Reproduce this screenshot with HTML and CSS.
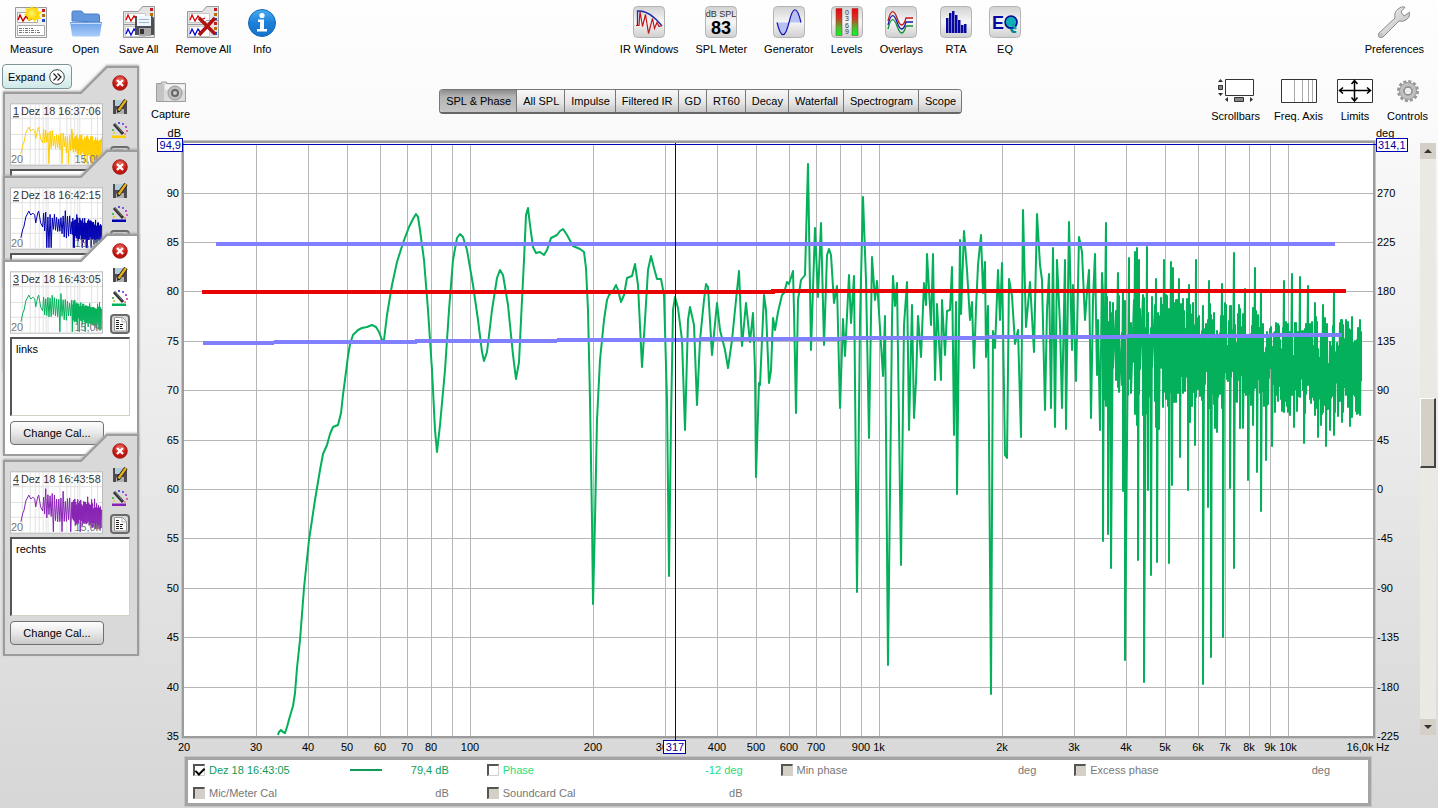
FILE: index.html
```
<!DOCTYPE html>
<html lang="en">
<head>
    <meta charset="UTF-8">
    <meta name="viewport" content="width=device-width, initial-scale=1.0">
    <title>Room Measurement</title>
    <link rel="stylesheet" href="styles.css">
</head>
<body>
    <!-- Shared icons -->
    <svg class="defs" width="0" height="0" aria-hidden="true">
        <defs>
            <linearGradient id="gTile" x1="0" y1="0" x2="0" y2="1"><stop offset="0" stop-color="#d2d2d2"/><stop offset=".5" stop-color="#f6f6f6"/><stop offset="1" stop-color="#cfcfcf"/></linearGradient>
            <linearGradient id="gFolder" x1="0" y1="0" x2="0" y2="1"><stop offset="0" stop-color="#6a9fe8"/><stop offset="1" stop-color="#a9cdfa"/></linearGradient>
            <linearGradient id="gInfo" x1="0" y1="0" x2="0" y2="1"><stop offset="0" stop-color="#49aef5"/><stop offset=".5" stop-color="#1b7fd8"/><stop offset="1" stop-color="#1672cc"/></linearGradient>
            <linearGradient id="gLevel" x1="0" y1="0" x2="0" y2="1"><stop offset="0" stop-color="#f00010"/><stop offset=".35" stop-color="#d83020"/><stop offset=".7" stop-color="#50b830"/><stop offset="1" stop-color="#00ff20"/></linearGradient>
            <linearGradient id="gMetal" x1="0" y1="0" x2="1" y2="1"><stop offset="0" stop-color="#fafafa"/><stop offset="1" stop-color="#b4b4b4"/></linearGradient>
            <radialGradient id="gSun"><stop offset="0" stop-color="#fff27a"/><stop offset="1" stop-color="#ffd400"/></radialGradient>
            <radialGradient id="gClose" cx=".5" cy=".3"><stop offset="0" stop-color="#f07060"/><stop offset="1" stop-color="#c01410"/></radialGradient>
        </defs>
        <symbol id="tile" viewBox="0 0 32 32">
            <rect x=".5" y=".5" width="31" height="31" rx="4" fill="url(#gTile)" stroke="#b4b4b4"/>
        </symbol>
        <symbol id="sheets" viewBox="0 0 32 32">
            <path d="M.5 5.500h15l4-5h12v31h-31z" fill="#e4e4e4" stroke="#999"/>
            <path d="M2.500 7.500h20v9h-20zM2.500 20.500h20v10h-20z" fill="#fff" stroke="#c8c8c8"/>
            <path d="M.5 18.500h15l4-4h12" fill="none" stroke="#999"/>
            <path d="M3 14l2-5 3 6 3-5 3 4 4-2" fill="none" stroke="#d00000" stroke-width="1.300"/>
            <path d="M3 28l2-5 3 6 3-6 3 4" fill="none" stroke="#0000d0" stroke-width="1.300"/>
            <path d="M27 2h3v3h-3zM27 16h3v3h-3z" fill="#c02020"/><path d="M27 7h3v3h-3zM27 21h3v3h-3z" fill="#b07010"/><path d="M27 12h3v2h-3zM27 26h3v3h-3z" fill="#2050c0"/>
        </symbol>
        <symbol id="close" viewBox="0 0 16 16">
            <circle cx="8" cy="8" r="7.300" fill="url(#gClose)" stroke="#98100c" stroke-width=".8"/>
            <path d="M5 5l6 6M11 5l-6 6" stroke="#fff" stroke-width="2.400"/>
        </symbol>
        <symbol id="savePen" viewBox="0 0 16 16">
            <path d="M1 1h14v14h-14z" fill="#4a4a50"/><path d="M3 1h9v6h-9z" fill="#b4ccd4"/><path d="M4 10h8v5h-8z" fill="#b0b0b0"/>
            <path d="M14 1L6 12" stroke="#222" stroke-width="4"/><path d="M14 1L6.500 11.500" stroke="#e8b020" stroke-width="2.400"/><path d="M5 14l.5-3 2 1.500z" fill="#111"/>
        </symbol>
        <symbol id="wand" viewBox="0 0 16 16">
            <path d="M0 13.500h14v2.500h-14z" fill="currentColor"/>
            <path d="M2 2l9 10" stroke="#333" stroke-width="3"/><path d="M3 2l7 8" stroke="#777"/>
            <path d="M0 7h2v2h-2z" fill="#58b858"/><path d="M6 0h2v2h-2z" fill="#5058e0"/><path d="M10 1h2v2h-2z" fill="#8060e0"/><path d="M13 4h2v2h-2z" fill="#b050d0"/><path d="M14 8h2v2h-2z" fill="#e060b0"/><path d="M12 11h2v2h-2z" fill="#f09090"/><path d="M1 10h2v2h-2z" fill="#e0d040"/>
        </symbol>
        <symbol id="notes" viewBox="0 0 20 20">
            <rect x="1" y="1" width="18" height="18" rx="3" fill="#d8d8d8" stroke="#6a6a6a" stroke-width="2"/>
            <path d="M4.500 3.500h8l4 4v9.500h-12z" fill="#fff" stroke="#999"/><path d="M12 3v5h5" fill="none" stroke="#aaa"/>
            <path d="M6 6.500h4M6 8.500h3M6 10.500h7M6 12.500h6M6 14.500h8" stroke="#222" stroke-dasharray="3 1"/>
        </symbol>
    </svg>

    <header class="toolbar">
        <div class="tool-group">
            <button class="tool">
                <svg viewBox="0 0 32 32"><path d="M.5 1.500h31v30h-31z" fill="#f2f2f2" stroke="#999"/><path d="M2.500 6.500h20v10h-20zM2.500 19.500h27v10h-27z" fill="#fff" stroke="#aaa"/><path d="M3 14l2-5 3 6 3-5 3 4 4-2" fill="none" stroke="#d00000" stroke-width="1.500"/><path d="M4 22.500h14M4 24.500h20M4 26.500h22" stroke="#777" stroke-dasharray="3 1 1 1"/><path d="M27 3h3v3h-3z" fill="#c02020"/><path d="M27 8h3v3h-3z" fill="#b07010"/><path d="M27 13h3v3h-3z" fill="#2050c0"/><path d="M17 0l2 3 4-2 0 4 4 1-3 3 2 4-4 0-2 3-3-3-4 2 0-4-4-2 3-3-2-4 4 1z" fill="#ffde00"/><circle cx="17" cy="7.500" r="6" fill="url(#gSun)"/></svg>
                Measure
            </button>
            <button class="tool">
                <svg viewBox="0 0 32 32"><path d="M2 15V6.500q0-1.500 1.500-1.500h8l3 3h13q2 0 2 2v6z" fill="#6498de" stroke="#4a7cc4"/><path d="M0 16h32l-2 13q0 1.500-2 1.500h-24q-2 0-2-1.500z" fill="url(#gFolder)"/><path d="M1 17.500h30" stroke="#c4defc"/></svg>
                Open
            </button>
            <button class="tool">
                <svg viewBox="0 0 32 32"><use href="#sheets"/><path d="M12 10h17l2 2v17h-19z" fill="#4c5056"/><path d="M14 10h14v10h-14z" fill="#eef6fc"/><path d="M16 13.500h10M16 16.500h10" stroke="#9ab8d0"/><path d="M16 22h12v8h-12z" fill="#a8a8a8"/><path d="M17 23h4v5h-4z" fill="#333"/></svg>
                Save All
            </button>
            <button class="tool">
                <svg viewBox="0 0 32 32"><use href="#sheets"/><path d="M12 12L28 28M28 12L12 29" stroke="#b01010" stroke-width="3.500"/></svg>
                Remove All
            </button>
            <button class="tool narrow">
                <svg viewBox="2 0 28 32"><circle cx="16" cy="17" r="13.500" fill="url(#gInfo)" stroke="#1668b8"/><circle cx="16" cy="9.500" r="2.600" fill="#fff"/><path d="M12 13.500h6v9.500h3v2.500h-10v-2.500h3v-7h-2z" fill="#fff"/></svg>
                Info
            </button>
        </div>
        <div class="tool-group">
            <button class="tool">
                <svg viewBox="0 0 32 32"><use href="#tile"/><path d="M4.500 20V5h2Q17 5 29 20" fill="none" stroke="#2030b0" stroke-width="1.300"/><path d="M3 19.500h3l1-14 2.500 15 3-12 3 19 4-15 2 10 2.500-6 2 4 3-1" fill="none" stroke="#c01818" stroke-width="1.200"/></svg>
                IR Windows
            </button>
            <button class="tool">
                <svg viewBox="0 0 32 32"><use href="#tile"/><text x="16" y="11" class="spl-unit">dB SPL</text><text x="16" y="28" class="spl-value">83</text></svg>
                SPL Meter
            </button>
            <button class="tool">
                <svg viewBox="0 0 32 32"><use href="#tile"/><path d="M4 16.500Q10 41 16 16.500Q22-9 28 16.500z" fill="#b8c0f4"/><path d="M4 16.500Q10 41 16 16.500Q22-9 28 16.500" fill="none" stroke="#1414b0" stroke-width="1.200"/></svg>
                Generator
            </button>
            <button class="tool">
                <svg viewBox="0 0 32 32"><use href="#tile"/><path d="M5 2.500h6v27h-6zM21 2.500h6v27h-6z" fill="url(#gLevel)" stroke="#804030" stroke-width=".5"/><text x="16" y="9" class="level-num">0</text><text x="16" y="15" class="level-num">3</text><text x="16" y="22" class="level-num">6</text><text x="16" y="28" class="level-num">9</text></svg>
                Levels
            </button>
            <button class="tool">
                <svg viewBox="0 0 32 32"><use href="#tile"/><g fill="none" stroke-width="1.300"><path d="M3 15Q7-2 12 12T21 12L28 12" stroke="#c01818"/><path d="M3 19Q7 2 12 16T21 16L28 16" stroke="#1818a8"/><path d="M3 23Q7 6 12 20T21 20L28 20" stroke="#109030"/></g></svg>
                Overlays
            </button>
            <button class="tool">
                <svg viewBox="0 0 32 32"><use href="#tile"/><path d="M6 12h2.500v15h-2.500zM9 7h2.500v20h-2.500zM12 5h2.500v22h-2.500zM15 9h2.500v18h-2.500zM18 14h2.500v13h-2.500zM21 19h2.500v8h-2.500zM24 18h2.500v9h-2.500z" fill="#0808a0"/></svg>
                RTA
            </button>
            <button class="tool">
                <svg viewBox="0 0 32 32"><use href="#tile"/><text x="3" y="23" class="eq-text">E<tspan fill="#088898">Q</tspan></text><circle cx="22" cy="16" r="5" fill="#10b0b8"/><circle cx="22" cy="16" r="6" fill="none" stroke="#0808a0" stroke-width="1.500"/><path d="M23 18l4 5" stroke="#10a0a8" stroke-width="2.500"/></svg>
                EQ
            </button>
        </div>
        <div class="tool-group">
            <button class="tool">
                <svg viewBox="0 0 32 32"><path d="M1 27L17 12Q16 6 20 3Q23 0 27 1L23 6L26 10L32 6Q32 12 28 14Q25 16 21 15L5 31Q3 33 1 31Q-1 29 1 27z" fill="url(#gMetal)" stroke="#8c8c8c"/><circle cx="3" cy="29" r="1.300" fill="#fff" stroke="#888" stroke-width=".7"/></svg>
                Preferences
            </button>
        </div>
    </header>

    <div class="workspace">
        <aside class="sidebar">
            <button class="expand-btn">Expand
                <svg viewBox="0 0 16 16"><circle cx="8" cy="8" r="7.300" fill="#fff" stroke="#444"/><path d="M4.500 4.500L8 8L4.500 11.500M8.500 4.500L12 8L8.500 11.500" fill="none" stroke="#222" stroke-width="1.200"/></svg>
            </button>
            <ul id="cards"></ul>
        </aside>

        <main class="content">
            <div class="graph-bar">
                <button class="tool small">
                    <svg viewBox="0 0 36 24"><path d="M3.500 4.500h5V3h5v1.500h19v18h-29z" fill="#dcdcdc" stroke="#9c9c9c"/><path d="M4 5h7v17h-7z" fill="#c4c4c4"/><path d="M12 5.500h20v5h-20z" fill="#f4f4f4"/><circle cx="22" cy="14" r="7" fill="#c0c0c0" stroke="#999"/><circle cx="22" cy="14" r="4" fill="#666"/><circle cx="22" cy="14" r="2" fill="#ccc"/></svg>
                    Capture
                </button>
                <nav class="tabs">
                    <button class="active">SPL &amp; Phase</button>
                    <button>All SPL</button>
                    <button>Impulse</button>
                    <button>Filtered IR</button>
                    <button>GD</button>
                    <button>RT60</button>
                    <button>Decay</button>
                    <button>Waterfall</button>
                    <button>Spectrogram</button>
                    <button>Scope</button>
                </nav>
                <div class="tool-group graph-tools">
                    <button class="tool small">
                        <svg viewBox="0 0 36 24"><path d="M7.500.5h28v16h-28z" fill="#fff" stroke="#333"/><path d="M.5 6.500h4v4h-4zM16.500 18.500h9v4h-9z" fill="#888" stroke="#333"/><path d="M0 3l2.500-3L5 3zM0 14l2.500 3L5 14zM10 18v5l-3-2.500zM32 18v5l3-2.500z" fill="#333"/></svg>
                        Scrollbars
                    </button>
                    <button class="tool small">
                        <svg viewBox="0 0 36 24"><path d="M.5.5h35v23h-35z" fill="#fff" stroke="#333"/><path d="M13.500 1v22M21.500 1v22M27.500 1v22M31.500 1v22" stroke="#aaa"/></svg>
                        Freq. Axis
                    </button>
                    <button class="tool small">
                        <svg viewBox="0 0 36 24"><path d="M.5.5h35v23h-35z" fill="#fff" stroke="#333"/><path d="M3 11.500h30M17.500 2v20M6 8.500l-3.500 3 3.500 3M30 8.500l3.500 3-3.500 3M14.500 5l3-3.500 3 3.500M14.500 18.500l3 3.500 3-3.500" fill="none" stroke="#000" stroke-width="1.500"/></svg>
                        Limits
                    </button>
                    <button class="tool small">
                        <svg viewBox="0 0 36 24"><circle cx="18" cy="12" r="9.500" fill="none" stroke="#999" stroke-width="3" stroke-dasharray="3 1.974"/><circle cx="18" cy="12" r="8.500" fill="#c0c0c0" stroke="#999"/><circle cx="18" cy="12" r="4" fill="#eee" stroke="#888" stroke-width="1.500"/></svg>
                        Controls
                    </button>
                </div>
            </div>

            <div class="graph-row">
                <svg id="graph" viewBox="145 125 1270 632"></svg>
                <div class="scrollbar">
                    <button aria-label="Scroll up"><svg viewBox="0 0 16 16"><path d="M4 10l4-4 4 4z"/></svg></button>
                    <div class="track">
                        <div class="thumb"></div>
                    </div>
                    <button aria-label="Scroll down"><svg viewBox="0 0 16 16"><path d="M4 6l4 4 4-4z"/></svg></button>
                </div>
            </div>

            <div class="legend">
                <div class="legend-item trace">
                    <label><input type="checkbox" checked> Dez 18 16:43:05</label>
                    <span class="trace-line"></span>
                    <span class="value">79,4 dB</span>
                </div>
                <div class="legend-item phase">
                    <label><input type="checkbox"> Phase</label>
                    <span class="value">-12 deg</span>
                </div>
                <div class="legend-item">
                    <label><input type="checkbox" disabled> Min phase</label>
                    <span class="value">deg</span>
                </div>
                <div class="legend-item">
                    <label><input type="checkbox" disabled> Excess phase</label>
                    <span class="value">deg</span>
                </div>
                <div class="legend-item">
                    <label><input type="checkbox" disabled> Mic/Meter Cal</label>
                    <span class="value">dB</span>
                </div>
                <div class="legend-item">
                    <label><input type="checkbox" disabled> Soundcard Cal</label>
                    <span class="value">dB</span>
                </div>
            </div>
        </main>
    </div>

    <script src="script.js"></script>
</body>
</html>
```
FILE: styles.css
```
* {
    box-sizing: border-box;
}

body {
    margin: 0;
    min-height: 100vh;
    font-family: "Liberation Sans", Arial, sans-serif;
    font-size: 11px;
    line-height: 14px;
    color: #000;
    background: linear-gradient(#fefefe, #fafafa 15%, #ececec 50%, #d6d6d6);
}

button,
textarea {
    font: inherit;
    color: inherit;
}

button {
    padding: 0;
    border: none;
    background: none;
    cursor: pointer;
}

.defs {
    position: absolute;
}

/* Toolbar */
.toolbar {
    display: flex;
    justify-content: space-between;
    padding: 6px 14px 0 10px;
    height: 64px;
}

.tool-group {
    display: flex;
    align-items: flex-start;
    gap: 17px;
}

.tool {
    display: flex;
    flex-direction: column;
    align-items: center;
    gap: 4px;
    white-space: nowrap;
}

.tool svg {
    width: 32px;
    height: 32px;
}

.tool.narrow svg {
    width: 28px;
}

.tool.small svg {
    width: 36px;
    height: 24px;
}

.spl-unit {
    font-size: 9px;
    text-anchor: middle;
    fill: #333;
}

.spl-value {
    font-size: 18px;
    font-weight: bold;
    text-anchor: middle;
}

.level-num {
    font-size: 7px;
    text-anchor: middle;
    fill: #333;
}

.eq-text {
    font-size: 18px;
    font-weight: bold;
    fill: #0808a0;
}

/* Measurement list */
.workspace {
    display: flex;
}

.sidebar {
    width: 140px;
    flex: none;
}

.expand-btn {
    position: relative;
    z-index: 1;
    display: flex;
    align-items: center;
    justify-content: space-between;
    width: 70px;
    height: 25px;
    margin-left: 2px;
    padding: 0 6px 0 5px;
    border: 1px solid #7f9496;
    border-radius: 4px;
    background: linear-gradient(#fbfefe, #cfe9e8);
}

.expand-btn svg {
    width: 16px;
    height: 16px;
}

#cards {
    list-style: none;
    margin: -23px 0 0 3px;
    padding: 0;
}

.card {
    position: relative;
    width: 136px;
    height: 84px;
}

.card.open {
    height: 200px;
}

.card:last-child {
    height: 222px;
}

.card-shape {
    position: absolute;
    inset: 0;
    width: 136px;
    height: 222px;
    fill: #d9d9d9;
    stroke: #9c9c9c;
    stroke-width: 2;
    filter: drop-shadow(0 -1px 1px #aaa);
}

.card.selected .card-shape {
    fill: #fff;
}

.card-body {
    position: relative;
    padding: 9px 9px 0 7px;
}

.card-top {
    display: flex;
    align-items: flex-end;
    gap: 7px;
    height: 91px;
}

.preview {
    width: 94px;
    height: 63px;
}

.preview text {
    fill: #333;
}

.preview .range {
    fill: #777;
}

.card-tools {
    display: flex;
    flex-direction: column;
    align-items: center;
    justify-content: space-between;
    height: 91px;
}

.card-tools button,
.card-tools svg {
    display: block;
    width: 16px;
    height: 16px;
}

.card-tools .notes-btn,
.card-tools .notes-btn svg {
    width: 20px;
    height: 20px;
}

.card textarea {
    display: block;
    width: 120px;
    height: 79px;
    margin-top: 3px;
    padding: 3px 4px;
    resize: none;
    outline: none;
    background: #fff;
    border: 1px solid #d4d0c8;
    border-top: 2px solid #555;
    border-left: 2px solid #555;
}

.cal-btn {
    width: 94px;
    height: 24px;
    margin-top: 5px;
    border: 1px solid #707070;
    border-radius: 4px;
    background: linear-gradient(#fdfdfd, #e8e8e8 50%, #c9c9c9);
}

/* Graph header */
.content {
    flex: 1;
    min-width: 0;
}

.graph-bar {
    display: flex;
    justify-content: space-between;
    align-items: flex-start;
    height: 61px;
    padding: 15px 10px 0 11px;
}

.graph-tools {
    gap: 14px;
}

.graph-tools .tool {
    gap: 6px;
}

.tabs {
    display: flex;
    margin-top: 10px;
    border: 1px solid #777;
    border-bottom: 2px solid #666;
    border-radius: 4px;
    overflow: hidden;
}

.tabs button {
    height: 22px;
    padding: 0 5px 0 6px;
    border-right: 1px solid #777;
    background: linear-gradient(#f8f8f8, #e4e4e4 60%, #c6c6c6);
}

.tabs button:last-child {
    border-right: none;
}

.tabs .active {
    background: linear-gradient(#8a8a8a, #b4b4b4 30%, #c4c4c4);
}

/* Graph */
.graph-row {
    display: flex;
    gap: 5px;
    padding: 0 2px 0 5px;
}

#graph {
    display: block;
    flex: 1;
    min-width: 0;
}

.frame {
    fill: #fff;
    stroke: #c4c4c4;
    stroke-width: 2;
}

.frame-inner {
    fill: none;
    stroke: #9c9c9c;
    stroke-width: 2;
}

.grid {
    stroke: #b6b6b6;
    shape-rendering: crispEdges;
}

.trace-path {
    fill: none;
    stroke: #04b05a;
    stroke-width: 2;
    stroke-linejoin: round;
}

.marker {
    fill: none;
    stroke: #8080ff;
    stroke-width: 4;
    shape-rendering: crispEdges;
}

.marker.target {
    stroke: #e80404;
}

.cursor {
    fill: #fff;
    stroke: #0000b4;
    shape-rendering: crispEdges;
}

.cursor-text {
    fill: #0000a0;
}

.end {
    text-anchor: end;
}

.middle {
    text-anchor: middle;
}

.scrollbar {
    display: flex;
    flex-direction: column;
    width: 16px;
    margin: 18px 0 22px;
}

.scrollbar button,
.scrollbar svg {
    display: block;
    width: 16px;
    height: 16px;
    background: #d4d0c8;
    fill: #333;
}

.track {
    position: relative;
    flex: 1;
    background: #ebe9e4;
}

.thumb {
    position: absolute;
    top: calc(43% - 2px);
    width: 16px;
    height: 70px;
    background: #d4d0c8;
    border: 1px solid #fff;
    border-right: 2px solid #444;
    border-bottom: 2px solid #444;
}

/* Legend */
.legend {
    display: grid;
    grid-template-columns: repeat(4, 1fr);
    row-gap: 9px;
    margin: 0 67px 4px 45px;
    padding: 3px 0 3px 5px;
    background: #fff;
    border: 3px solid #a4a4a4;
    outline: 1px solid #c4c4c4;
}

.legend-item {
    display: flex;
    align-items: center;
    padding-right: 38px;
    color: #777;
}

.legend-item label {
    display: flex;
    align-items: center;
    gap: 4px;
    flex: 1;
}

.legend-item .value {
    width: 67px;
    text-align: right;
}

.legend-item input {
    appearance: none;
    position: relative;
    width: 12px;
    height: 12px;
    margin: 0;
    background: #fff;
    border: 1px solid #d4d0c8;
    border-top: 2px solid #555;
    border-left: 2px solid #555;
}

.legend-item input:disabled {
    background: #d4d0c8;
}

.legend-item input:checked::after {
    content: "";
    position: absolute;
    left: 2px;
    top: 0;
    width: 4px;
    height: 7px;
    border: solid #000;
    border-width: 0 2px 2px 0;
    transform: rotate(45deg);
}

.trace {
    color: #0f9c5a;
}

.trace-line {
    width: 32px;
    height: 2px;
    background: #0f9c5a;
}

.phase {
    color: #20e07c;
}
```
FILE: script.js
```
const measurements = [
    { id: 1, name: "Dez 18 16:37:06", color: "#ffcc00", notes: "", open: false, level: 26, depth: 12 },
    { id: 2, name: "Dez 18 16:42:15", color: "#0000b0", notes: "", open: false, level: 24, depth: 16 },
    { id: 3, name: "Dez 18 16:43:05", color: "#04b05a", notes: "links", open: true, selected: true, level: 22, depth: 16 },
    { id: 4, name: "Dez 18 16:43:58", color: "#8822b4", notes: "rechts", open: true, level: 20, depth: 22 }
];

// Repeatable noise, so the traces look the same on every load
function makeRandom(seed) {
    let s = seed;
    return () => {
        s = (s * 1103515245 + 12345) % 2147483648;
        return s / 2147483648;
    };
}

// Small trace inside a card
function previewPath(m) {
    const rand = makeRandom(m.id * 7919);
    let d = "M11 51L13 42L14 40L16 30L19 24L21 28L23 26L25 28L26 36L28 26L29 24L31 36L33 40L34 26";
    let up = false;
    for (let x = 35; x <= 93; x += x < 62 ? 1.1 : 0.5) {
        const t = (x - 35) / 58;
        let y;
        if (up) {
            y = m.level + t * (34 - m.level) + rand() * 6;
            if (Math.abs(x - 50) < 0.6) y = 15;
            else if (rand() > 0.85) y -= 5;
        } else {
            y = m.level + m.depth + t * (53 - m.level - m.depth) + rand() * 7;
            if (rand() > 0.84 && x > 36 && x < 84) y = 61;
        }
        d += `L${x.toFixed(1)} ${y.toFixed(1)}`;
        up = !up;
    }
    return d;
}

function previewGrid() {
    let d = "";
    [12, 20, 25, 29, 33, 36, 38, 50, 57, 61, 65, 68, 70, 82, 88].forEach(x => d += `M${x}.5 1V62`);
    [15, 31, 46].forEach(y => d += `M1 ${y}.5H93`);
    return d;
}

function createCard(m) {
    const card = document.createElement("li");
    card.className = "card" + (m.open ? " open" : "") + (m.selected ? " selected" : "");
    card.innerHTML = `
        <svg class="card-shape" viewBox="0 0 136 222"><path d="M1 27H78L104 1H135V221H1z"/></svg>
        <div class="card-body">
            <div class="card-top">
                <svg class="preview" viewBox="0 0 94 63">
                    <rect x=".5" y=".5" width="93" height="62" fill="#fff" stroke="#bbb"/>
                    <path d="${previewGrid()}" stroke="#e2e2e2"/>
                    <path d="${previewPath(m)}" fill="none" stroke="${m.color}"/>
                    <text x="3" y="12" text-decoration="underline">${m.id}</text>
                    <text x="11" y="12">${m.name}</text>
                    <text class="range" x="1" y="60">20</text>
                    <text class="range end" x="92" y="60">15,0k</text>
                </svg>
                <div class="card-tools">
                    <button aria-label="Remove"><svg><use href="#close"/></svg></button>
                    <button aria-label="Save"><svg><use href="#savePen"/></svg></button>
                    <button aria-label="Change colour" style="color: ${m.color}"><svg><use href="#wand"/></svg></button>
                    <button aria-label="Notes" class="notes-btn"><svg><use href="#notes"/></svg></button>
                </div>
            </div>
            <textarea aria-label="Notes for ${m.name}">${m.notes}</textarea>
            <button class="cal-btn">Change Cal...</button>
        </div>
    `;
    document.getElementById("cards").appendChild(card);
}

// Graph area in viewBox units
const plot = { left: 184, right: 1373, top: 144, bottom: 736 };
const freqToX = f => Math.round(470.3 + 409 * Math.log10(f / 100));
const dbToY = db => Math.round(736 - (db - 35) * 9.88);

const lowTrace = [
    278,735, 279,732, 281,730, 283,732, 285,733, 287,727, 290,716, 293,706, 295,693, 297,668, 300,640, 304,588, 309,540, 315,500,
    320,470, 323,454, 327,445, 330,434, 333,427, 338,425, 341,413, 343,395, 346,372, 348,356, 350,344, 353,335, 358,330, 362,328,
    367,327, 372,325, 376,327, 379,332, 382,340, 384,340, 387,315, 392,285, 397,262, 403,243, 409,227, 413,219, 416,214, 418,217,
    420,230, 424,260, 428,310, 432,370, 435,430, 437,452, 440,425, 445,370, 449,310, 453,260, 457,238, 460,234, 463,237, 467,250,
    473,285, 478,320, 482,352, 484,361, 487,352, 492,310, 497,278, 500,270, 503,275, 508,305, 513,355, 516,379, 519,362, 521,320,
    524,260, 526,215, 528,208, 530,225, 533,247, 536,253, 540,252, 544,255, 547,250, 551,238, 557,235, 560,231, 563,229, 567,235,
    573,246, 580,249, 584,252, 586,268, 588,310, 590,400, 592,520, 593,604, 595,520, 597,420, 600,360, 604,320, 607,300, 609,295,
    613,291, 616,285, 618,290, 621,302, 624,295, 627,278, 632,276, 635,264, 638,285, 642,367, 645,320, 648,270, 651,256, 654,268,
    657,279, 661,279, 664,295, 667,400, 669,576, 671,420, 673,310, 675,297, 678,308, 682,340, 685,430, 688,320, 690,307, 694,325,
    697,405, 700,340, 704,300, 706,284, 708,287, 712,355, 717,303, 720,330, 725,350, 728,368, 732,340, 736,300, 739,271, 742,346,
    746,303, 750,342, 753,313, 755,370, 756,477, 759,383, 760,385, 762,340, 764,295, 766,310, 769,383, 771,370, 773,318, 775,330,
    778,312, 782,295, 784,293, 787,282, 789,284, 793,271, 794,310, 796,413, 798,300, 801,280, 805,275, 808,164, 811,350, 815,228,
    818,297, 821,223, 824,345, 827,255, 829,249, 831,255, 834,303, 837,286, 840,408, 843,319, 845,356, 849,275, 851,323, 854,276,
    857,592, 860,320, 863,197, 866,280, 869,438, 872,257, 875,300, 877,281, 883,376, 885,316, 888,665, 892,320, 893,276, 895,306,
    897,283, 901,565, 904,325, 907,282, 909,430, 912,305, 914,418, 916,382, 918,316, 921,357, 924,283, 926,305, 927,254, 931,325,
    933,254, 935,380, 937,304, 941,380, 942,300, 945,355, 947,311, 950,310, 952,267, 954,435, 956,302, 957,494, 960,240, 961,314,
    964,231, 967,270, 970,320, 972,302, 974,368, 976,308, 978,265, 981,235, 983,293, 985,262, 986,357, 988,306, 991,694, 993,331,
    995,348, 998,270, 1000,320, 1002,263, 1005,455, 1007,458, 1009,279, 1012,296, 1015,344, 1018,330, 1021,437, 1023,210, 1026,327,
    1030,282, 1034,352, 1037,214, 1040,265, 1042,280, 1045,410, 1047,310, 1049,274, 1051,408, 1053,248, 1055,427, 1057,260,
    1060,325, 1062,408, 1065,260, 1066,429, 1069,222, 1072,350, 1073,285, 1076,381, 1079,237, 1082,252, 1085,320, 1087,292,
    1089,270, 1091,418, 1093,300, 1095,254, 1097,375, 1098,320, 1100,430, 1102,273
];

// Single peaks and dips in the dense upper range
const peaks = {
    1106: 223, 1118: 273, 1129: 258, 1135: 252, 1137: 248, 1139: 260, 1147: 247, 1156: 279, 1164: 260, 1171: 262, 1173: 268,
    1179: 279, 1189: 285, 1196: 260, 1209: 281, 1222: 284, 1234: 253, 1245: 289, 1255: 268, 1261: 290, 1284: 281, 1292: 274,
    1300: 277, 1308: 286, 1315: 303, 1323: 305, 1334: 292, 1346: 320, 1352: 317, 1360: 320
};
const dips = {
    1103: 541, 1108: 534, 1111: 568, 1123: 491, 1125: 660, 1138: 560, 1144: 682, 1148: 490, 1151: 575, 1157: 562, 1163: 407,
    1169: 563, 1172: 485, 1180: 457, 1188: 490, 1190: 422, 1195: 445, 1203: 684, 1208: 507, 1211: 657, 1215: 428, 1217: 432,
    1223: 637, 1230: 488, 1234: 568, 1240: 428, 1243: 428, 1248: 480, 1253: 425, 1257: 472, 1261: 511, 1266: 460, 1272: 446,
    1290: 415, 1294: 427, 1304: 443, 1318: 437, 1321: 425, 1326: 446, 1330: 430, 1334: 435, 1342: 422, 1350: 426, 1357: 414,
    1360: 415
};

function tracePath() {
    let d = "M";
    for (let i = 0; i < lowTrace.length; i += 2) {
        d += `${i ? "L" : ""}${lowTrace[i]} ${lowTrace[i + 1]}`;
    }
    const rand = makeRandom(4305);
    for (let x = 1103; x <= 1361; x++) {
        const t = (x - 1103) / 258;
        const top = 285 + t * 38 + rand() * 48;
        const bottom = 345 + t * 35 + rand() * (x < 1160 ? 85 : 58 - t * 20);
        if (x < 1155 && x % 3 && !peaks[x] && !dips[x]) continue;
        d += `L${x} ${peaks[x] || top.toFixed(0)}L${x} ${dips[x] || bottom.toFixed(0)}`;
    }
    return d;
}

function drawGraph() {
    const freqs = [30, 40, 50, 60, 70, 80, 90, 100, 200, 300, 400, 500, 600, 700, 800, 900,
        1000, 2000, 3000, 4000, 5000, 6000, 7000, 8000, 9000, 10000];
    const unlabelled = [90, 800];
    let grid = "";
    let labels = `<text class="middle" x="184" y="751">20</text>`;

    freqs.forEach(f => {
        const x = freqToX(f);
        grid += `M${x}.5 ${plot.top}V${plot.bottom}`;
        if (!unlabelled.includes(f)) {
            labels += `<text class="middle" x="${x}" y="751">${f >= 1000 ? f / 1000 + "k" : f}</text>`;
        }
    });

    for (let db = 90; db >= 35; db -= 5) {
        const y = dbToY(db);
        if (db > 35) grid += `M${plot.left} ${y}.5H${plot.right}`;
        labels += `<text class="end" x="179" y="${y + 4}">${db}</text>`;
        labels += `<text x="1377" y="${y + 4}">${(db - 60) * 9}</text>`;
    }

    document.getElementById("graph").innerHTML = `
        <rect class="frame" x="182" y="141" width="1193" height="597"/>
        <rect class="frame-inner" x="183" y="142" width="1191" height="595"/>
        <path class="grid" d="${grid}"/>
        <path class="trace-path" d="${tracePath()}"/>
        <path class="marker" d="M216 244H1335"/>
        <path class="marker target" d="M202 292H773V291H1346"/>
        <path class="marker" d="M203 343L1342 335"/>
        ${labels}
        <text class="end" x="181" y="137">dB</text>
        <text x="1376" y="137">deg</text>
        <text class="middle" x="1360" y="751">16,0k</text>
        <text x="1376" y="751">Hz</text>
        <path class="cursor" d="M183 144.500H1376"/>
        <path class="cursor" d="M675.500 143V740"/>
        <rect class="cursor" x="157.500" y="138.500" width="25" height="13"/>
        <text class="cursor-text end" x="181" y="149">94,9</text>
        <rect class="cursor" x="1376.500" y="138.500" width="31" height="13"/>
        <text class="cursor-text" x="1378" y="149">314,1</text>
        <rect class="cursor" x="663.500" y="740.500" width="22" height="13"/>
        <text class="cursor-text middle" x="675" y="751">317</text>
    `;
}

measurements.forEach(createCard);
drawGraph();
```
